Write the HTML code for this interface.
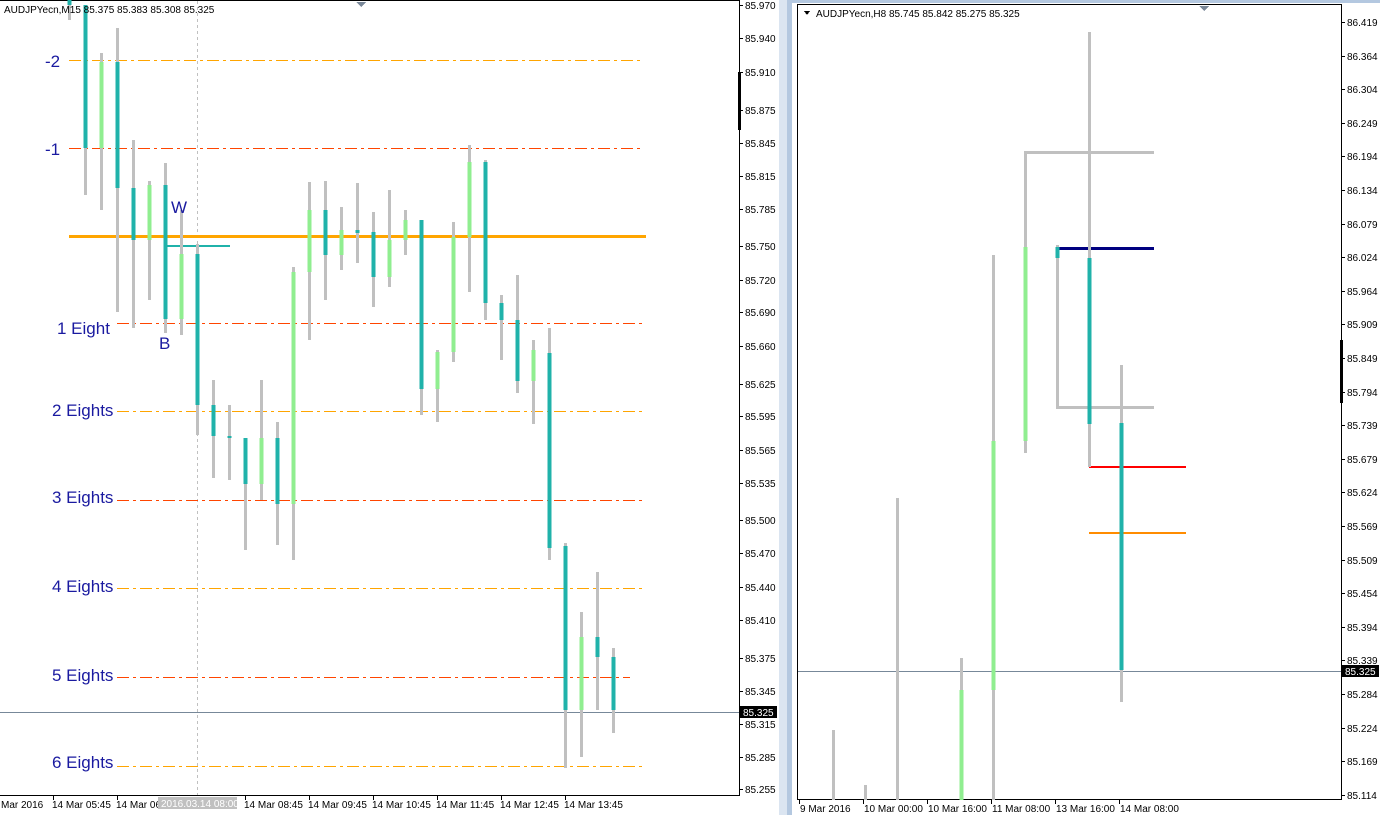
<!DOCTYPE html>
<html><head><meta charset="utf-8"><style>
html,body{margin:0;padding:0;background:#fff;}
svg{display:block;font-family:"Liberation Sans",Tahoma,sans-serif;}
.ax{font-size:10px;}
.lb{font-size:17px;fill:#1a1aa0;}
</style></head><body>
<svg width="1380" height="815" viewBox="0 0 1380 815" shape-rendering="crispEdges">
<rect width="1380" height="815" fill="#fff"/>
<rect x="779" y="0" width="8" height="815" fill="#dbe5f1"/>
<rect x="787" y="0" width="5" height="815" fill="#b4c8e0"/>
<rect x="792" y="0" width="588" height="3" fill="#b4c8e0"/>
<line x1="0" y1="0.5" x2="740" y2="0.5" stroke="#000"/>
<line x1="739.5" y1="0" x2="739.5" y2="796" stroke="#000"/>
<line x1="0" y1="795.5" x2="740" y2="795.5" stroke="#000"/>
<rect x="738" y="72" width="3" height="58" fill="#000"/>
<line x1="797.5" y1="4" x2="797.5" y2="800" stroke="#000"/>
<line x1="797" y1="4.5" x2="1342" y2="4.5" stroke="#000"/>
<line x1="1341.5" y1="4" x2="1341.5" y2="800" stroke="#000"/>
<line x1="797" y1="799.5" x2="1342" y2="799.5" stroke="#000"/>
<rect x="1340" y="340" width="3" height="63" fill="#000"/>
<line x1="197.5" y1="1" x2="197.5" y2="795" stroke="#c0c0c0" stroke-dasharray="3 3"/>
<g id="lv"></g>
<rect x="69" y="235" width="577" height="3" fill="#ffa500"/>
<rect x="165" y="245" width="65" height="2" fill="#20b2aa"/>
<line x1="0" y1="712.5" x2="739" y2="712.5" stroke="#778899"/>
<g id="lc"></g>
<line x1="798" y1="671.5" x2="1341" y2="671.5" stroke="#778899"/>
<g fill="#c0c0c0">
<rect x="1024" y="151" width="130" height="3"/>
<rect x="1024" y="151" width="3" height="96"/>
<rect x="1056" y="406" width="98" height="3"/>
<rect x="1056" y="250" width="3" height="158"/>
</g>
<rect x="1057" y="247" width="97" height="3" fill="#000080"/>
<rect x="1089" y="466" width="97" height="2" fill="#ff0000"/>
<rect x="1089" y="532" width="97" height="2" fill="#ff8c00"/>
<g id="rc"></g>
<text class="lb" x="45" y="67">-2</text>
<text class="lb" x="45" y="155">-1</text>
<text class="lb" x="57" y="334">1 Eight</text>
<text class="lb" x="52" y="416">2 Eights</text>
<text class="lb" x="52" y="503">3 Eights</text>
<text class="lb" x="52" y="592">4 Eights</text>
<text class="lb" x="52" y="681">5 Eights</text>
<text class="lb" x="52" y="768">6 Eights</text>
<text class="lb" x="171" y="213">W</text>
<text class="lb" x="159" y="349">B</text>
<text class="ax" x="4" y="13" fill="#000">AUDJPYecn,M15  85.375 85.383 85.308 85.325</text>
<path d="M356 2 L366 2 L361 7 Z" fill="#7a8899"/>
<path d="M1199 6 L1209 6 L1204 11 Z" fill="#7a8899"/>
<path d="M804 11 L810 11 L807 15 Z" fill="#000"/>
<text class="ax" x="816" y="17" fill="#000">AUDJPYecn,H8  85.745 85.842 85.275 85.325</text>
<g id="axes"></g>
</svg>
<script>
var ns="http://www.w3.org/2000/svg";
function R(g,x,y,w,h,c){var r=document.createElementNS(ns,"rect");r.setAttribute("x",x);r.setAttribute("y",y);r.setAttribute("width",w);r.setAttribute("height",h);r.setAttribute("fill",c);g.appendChild(r);}
function T(g,x,y,s,fill){var t=document.createElementNS(ns,"text");t.setAttribute("x",x);t.setAttribute("y",y);t.setAttribute("class","ax");t.setAttribute("fill",fill||"#000");t.textContent=s;g.appendChild(t);return t;}
var G="#c0c0c0",TL="#20b2aa",LG="#90ee90";
var lv=document.getElementById("lv");
[[69,640,60,"#ffa500"],[69,640,148,"#ff4500"],[117,640,323,"#ff4500"],[117,640,411,"#ffa500"],[117,640,500,"#ff4500"],[117,640,588,"#ffa500"],[117,630,677,"#ff4500"],[117,640,766,"#ffa500"]].forEach(function(l){
  var x=l[0];while(x<l[1]){R(lv,x,l[2],Math.min(12,l[1]-x),1,l[3]);x+=16;if(x<l[1])R(lv,x,l[2],3,1,l[3]);x+=7;}
});
var lc=document.getElementById("lc");
var L=[[69,0,20,0,5,TL],[85,5,195,5,148,TL],[101,53,210,62,148,LG],[117,28,312,62,188,TL],[133,140,328,188,240,TL],[149,181,300,185,240,LG],[165,163,333,185,319,TL],[181,210,335,254,319,LG],[197,244,435,254,405,TL],[213,380,478,405,436,TL],[229,405,480,436,438,TL],[245,438,550,438,484,TL],[261,380,500,438,484,LG],[277,422,545,438,504,TL],[293,267,560,272,504,LG],[309,182,340,210,272,LG],[325,181,300,210,255,TL],[341,207,270,230,255,LG],[357,183,263,230,233,TL],[373,212,307,232,277,TL],[389,190,287,240,277,LG],[405,210,255,220,240,LG],[421,220,415,220,389,TL],[437,350,422,352,389,LG],[453,222,362,237,352,LG],[469,145,292,162,237,LG],[485,160,320,162,303,TL],[501,295,360,303,320,TL],[517,275,393,320,381,TL],[533,340,424,350,381,LG],[549,328,560,353,548,TL],[565,543,768,546,710,TL],[581,612,757,637,710,LG],[597,572,710,637,657,TL],[613,648,733,657,710,TL]];
L.forEach(function(c){R(lc,c[0]-1,c[1],3,c[2]-c[1],G);R(lc,c[0]-1.5,c[3],4,Math.max(2,c[4]-c[3]),c[5]);});
var rc=document.getElementById("rc");
var Rr=[[833,730,800,0,0,G],[865,785,800,0,0,G],[897,498,800,0,0,G],[961,658,800,690,800,LG],[993,255,800,441,690,LG],[1025,245,453,247,441,LG],[1057,245,262,247,258,TL],[1089,32,467,258,424,TL],[1121,365,702,423,670,TL]];
Rr.forEach(function(c){R(rc,c[0]-1,c[1],3,c[2]-c[1],G);if(c[4]>c[3])R(rc,c[0]-1.5,c[3],4,c[4]-c[3],c[5]);});
var ax=document.getElementById("axes");
var la=[["85.970",5],["85.940",38],["85.910",72],["85.875",110],["85.845",143],["85.815",176],["85.785",209],["85.750",246],["85.720",280],["85.690",312],["85.660",346],["85.625",384],["85.595",416],["85.565",450],["85.535",483],["85.500",520],["85.470",553],["85.440",587],["85.410",620],["85.375",658],["85.345",691],["85.315",724],["85.285",757],["85.255",789]];
la.forEach(function(a){R(ax,740,a[1],3,1,"#000");T(ax,745,a[1]+4,a[0]);});
R(ax,740,706,37,12,"#000");T(ax,743,716,"85.325","#fff");
var ra=["86.419","86.364","86.304","86.249","86.194","86.134","86.079","86.024","85.964","85.909","85.849","85.794","85.739","85.679","85.624","85.569","85.509","85.454","85.394","85.339","85.284","85.224","85.169","85.114"];
ra.forEach(function(s,i){var y=Math.round(22+i*33.6);R(ax,1342,y,3,1,"#000");T(ax,1347,y+4,s);});
R(ax,1342,665,37,12,"#000");T(ax,1345,675,"85.325","#fff");
var bt=[["Mar 2016",1],["14 Mar 05:45",52],["14 Mar 06",116],["14 Mar 08:45",244],["14 Mar 09:45",308],["14 Mar 10:45",372],["14 Mar 11:45",436],["14 Mar 12:45",500],["14 Mar 13:45",564]];
bt.forEach(function(b){if(b[1]>5)R(ax,b[1]+1,796,1,4,"#000");T(ax,b[1],808,b[0]);});
R(ax,158,797,79,12,"#c0c0c0");T(ax,161,807,"2016.03.14 08:00","#fff");
var rt=[["9 Mar 2016",800],["10 Mar 00:00",864],["10 Mar 16:00",928],["11 Mar 08:00",992],["13 Mar 16:00",1056],["14 Mar 08:00",1120]];
rt.forEach(function(b){R(ax,b[1]-1,800,1,4,"#000");T(ax,b[1],812,b[0]);});
</script>
</body></html>
